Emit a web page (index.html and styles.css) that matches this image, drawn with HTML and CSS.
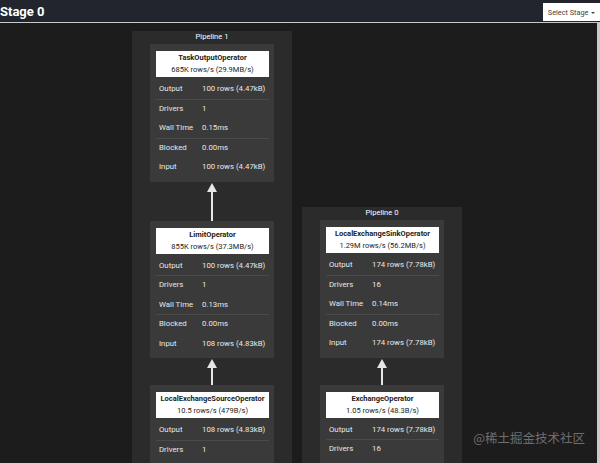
FILE: index.html
```html
<!DOCTYPE html>
<html lang="en">
  <head>
    <meta charset="UTF-8" />
    <title>Stage 0</title>
    <link rel="stylesheet" href="styles.css">
  </head>
  <body>
    <!-- Top bar -->
    <div class="topbar">
      <h2 class="stage-title">Stage 0</h2>
      <button class="stage-select">Select Stage <span class="caret"></span></button>
    </div>

    <!-- Pipelines graph -->
    <div class="graph">
      <div class="pipeline">
        <div class="pipeline-title">Pipeline 1</div>

        <div class="operator">
          <div class="op-head">
            <div class="op-name">TaskOutputOperator</div>
            <div>685K rows/s (29.9MB/s)</div>
          </div>
          <table class="op-stats">
            <tr><td>Output</td><td>100 rows (4.47kB)</td></tr>
            <tr><td>Drivers</td><td>1</td></tr>
            <tr><td>Wall Time</td><td>0.15ms</td></tr>
            <tr><td>Blocked</td><td>0.00ms</td></tr>
            <tr><td>Input</td><td>100 rows (4.47kB)</td></tr>
          </table>
        </div>

        <div class="arrow arrow-long"><span class="arrow-head"></span><span class="arrow-line"></span></div>

        <div class="operator">
          <div class="op-head">
            <div class="op-name">LimitOperator</div>
            <div>855K rows/s (37.3MB/s)</div>
          </div>
          <table class="op-stats">
            <tr><td>Output</td><td>100 rows (4.47kB)</td></tr>
            <tr><td>Drivers</td><td>1</td></tr>
            <tr><td>Wall Time</td><td>0.13ms</td></tr>
            <tr><td>Blocked</td><td>0.00ms</td></tr>
            <tr><td>Input</td><td>108 rows (4.83kB)</td></tr>
          </table>
        </div>

        <div class="arrow"><span class="arrow-head"></span><span class="arrow-line"></span></div>

        <div class="operator">
          <div class="op-head">
            <div class="op-name">LocalExchangeSourceOperator</div>
            <div>10.5 rows/s (479B/s)</div>
          </div>
          <table class="op-stats">
            <tr><td>Output</td><td>108 rows (4.83kB)</td></tr>
            <tr><td>Drivers</td><td>1</td></tr>
          </table>
        </div>
      </div>

      <div class="pipeline pipeline-lower">
        <div class="pipeline-title">Pipeline 0</div>

        <div class="operator">
          <div class="op-head">
            <div class="op-name">LocalExchangeSinkOperator</div>
            <div>1.29M rows/s (56.2MB/s)</div>
          </div>
          <table class="op-stats">
            <tr><td>Output</td><td>174 rows (7.78kB)</td></tr>
            <tr><td>Drivers</td><td>16</td></tr>
            <tr><td>Wall Time</td><td>0.14ms</td></tr>
            <tr><td>Blocked</td><td>0.00ms</td></tr>
            <tr><td>Input</td><td>174 rows (7.78kB)</td></tr>
          </table>
        </div>

        <div class="arrow"><span class="arrow-head"></span><span class="arrow-line"></span></div>

        <div class="operator">
          <div class="op-head">
            <div class="op-name">ExchangeOperator</div>
            <div>1.05 rows/s (48.3B/s)</div>
          </div>
          <table class="op-stats">
            <tr><td>Output</td><td>174 rows (7.78kB)</td></tr>
            <tr><td>Drivers</td><td>16</td></tr>
          </table>
        </div>
      </div>
    </div>

    <div class="watermark">@稀土掘金技术社区</div>
  </body>
</html>
```

FILE: styles.css
```css
body {
  margin: 0;
  font-family: Roboto, "Liberation Sans", Arial, sans-serif;
  background: #1c1c1c;
  color: #eee;
  overflow: hidden;
  height: 463px;
}

/* Top bar */
.topbar {
  height: 22px;
  background: #22252e;
  border-bottom: 1px solid #c9c9c9;
  display: flex;
  justify-content: space-between;
  align-items: center;
}

.stage-title {
  margin: 0;
  font-size: 13px;
  font-weight: 700;
  color: #fff;
}

.stage-select {
  align-self: flex-end;
  width: 57px;
  height: 18px;
  margin-bottom: 1px;
  padding: 0;
  border: none;
  background: #fff;
  color: #444;
  font-family: inherit;
  font-size: 7.3px;
  white-space: nowrap;
}

.caret {
  display: inline-block;
  width: 0;
  height: 0;
  margin-left: 1px;
  vertical-align: middle;
  border-top: 2px solid #444;
  border-left: 2px solid transparent;
  border-right: 2px solid transparent;
}

/* Graph */
.graph {
  display: flex;
  align-items: flex-start;
  gap: 10px;
  padding: 8px 0 0 132px;
  height: 440px;
  overflow: hidden;
  border-right: 3px solid #c9c9c9;
}

.pipeline {
  width: 160px;
  min-height: 460px;
  box-sizing: border-box;
  padding: 0 18px;
  background: #2b2b2b;
}

.pipeline-lower {
  margin-top: 176px;
}

.pipeline-title {
  height: 13px;
  line-height: 11px;
  text-align: center;
  font-size: 7.6px;
  color: #fff;
}

.operator {
  background: #3a3a3a;
  padding: 7px 5px 5px 6px;
}

.op-head {
  background: #fff;
  color: #222;
  text-align: center;
  font-size: 7.5px;
  line-height: 12px;
  padding: 1px 0;
  white-space: nowrap;
}

.op-name {
  font-weight: 700;
}

.op-stats {
  width: 100%;
  margin-top: 2px;
  border-collapse: collapse;
  font-size: 7.8px;
  color: #e8e8e8;
}

.op-stats td {
  height: 19.5px;
  padding: 0 0 0 3px;
  white-space: nowrap;
}

.op-stats td:first-child {
  width: 40px;
}

.op-stats tr:nth-child(even) td {
  box-shadow: inset 0 1px #4a4a4a;
}

/* Arrows between operators */
.arrow {
  height: 27px;
  box-sizing: border-box;
  padding-top: 1px;
  display: flex;
  flex-direction: column;
  align-items: center;
}

.arrow-long {
  height: 39px;
}

.arrow-head {
  width: 0;
  height: 0;
  border-bottom: 9px solid #e6e6e6;
  border-left: 5px solid transparent;
  border-right: 5px solid transparent;
}

.arrow-line {
  flex: 1;
  width: 2px;
  background: #e6e6e6;
}

.watermark {
  position: absolute;
  right: 15px;
  bottom: 16px;
  font-family: "Noto Sans CJK SC", sans-serif;
  font-size: 12.5px;
  color: #6e6e6e;
}
```
